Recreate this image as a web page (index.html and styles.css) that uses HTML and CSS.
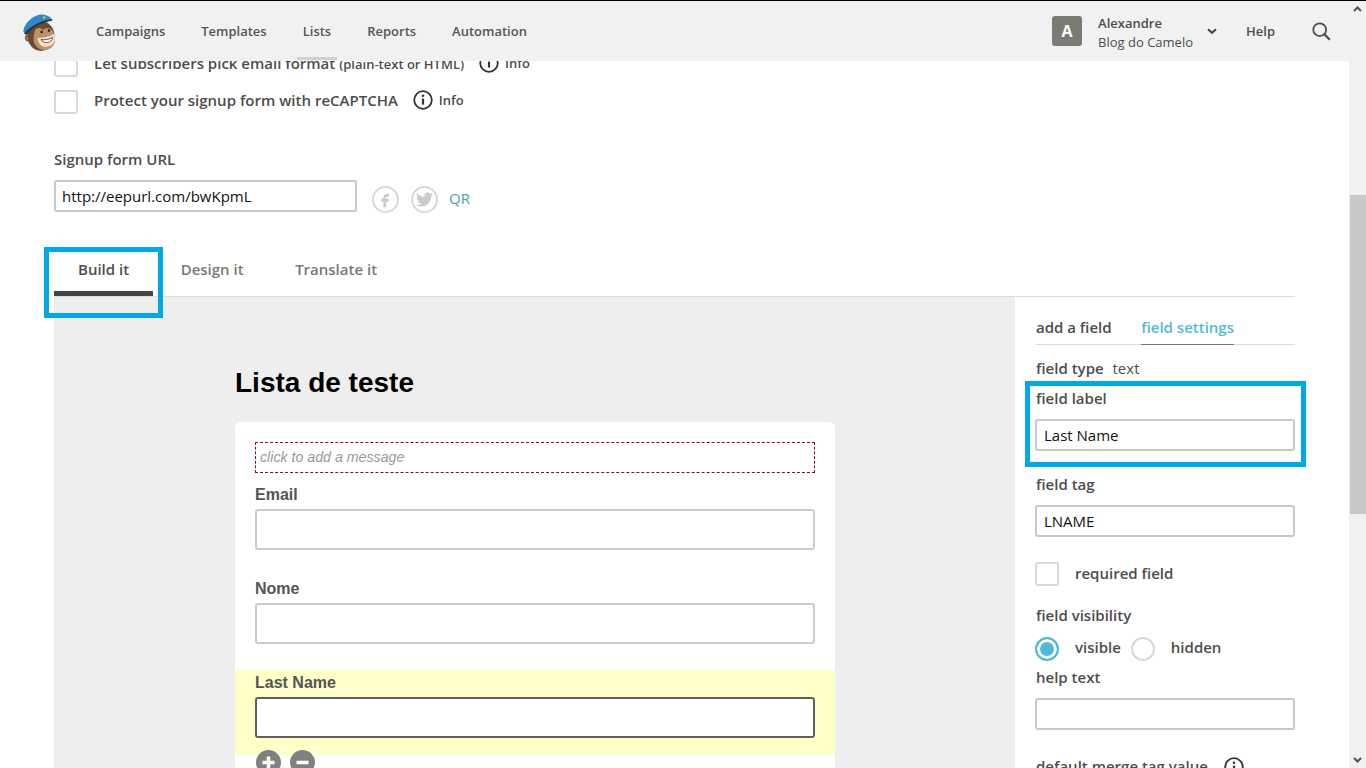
FILE: index.html
```html
<!DOCTYPE html>
<html lang="en">
<head>
  <meta charset="UTF-8">
  <title>Signup forms</title>
  <link rel="stylesheet" href="styles.css">
</head>
<body>

<div class="page">
  <header class="topbar">
    <svg class="logo" width="40" height="40" viewBox="0 0 40 40">
      <circle cx="9.500" cy="25" r="3.600" fill="#8b5e3c"/>
      <circle cx="9.500" cy="25" r="1.800" fill="#d9a87a"/>
      <ellipse cx="22" cy="23" rx="13.500" ry="15" fill="#6b4a30"/>
      <path d="M17 16c3-2 5-1 7 1 2-2 5-3 8-1 3 3 4 7 4 11 0 6-5 10-11 10-5 0-9-4-10-8-1-4 0-10 2-13z" fill="#bd9268"/>
      <path d="M18.500 25c4 0 11-1 16.500-4 2 5 1 12-8 13-5 0-8-4-8.500-9z" fill="#f3e2c8"/>
      <path d="M22 26.500c4 .8 8-.2 11.500-2-.3 3-2.500 5-6 5-2.500 0-4.500-1-5.500-3z" fill="#fff" stroke="#4a3020" stroke-width=".8"/>
      <circle cx="22.600" cy="19" r="1.200" fill="#22160e"/>
      <circle cx="30" cy="17.500" r="1.200" fill="#22160e"/>
      <path d="M4.300 18.700C5 11 12 4 19.300 2c5-1.200 11 .5 13.400 4C24 7 13 12 6 20z" fill="#3089c6"/>
      <path d="M5 20.500C12 12.500 23 7 32.700 6l1 1.500C24 9 14 14 7.500 22z" fill="#22384f"/>
      <circle cx="25" cy="4.500" r="1.200" fill="#e8c24a"/>
    </svg>
    <nav class="mainnav">
      <a>Campaigns</a>
      <a>Templates</a>
      <a class="has-marker">Lists</a>
      <a>Reports</a>
      <a>Automation</a>
    </nav>
    <div class="account">
      <span class="avatar">A</span>
      <span class="account-names">
        <b>Alexandre</b>
        <span>Blog do Camelo</span>
      </span>
      <svg class="chevron" width="10" height="7" viewBox="0 0 10 7"><path d="M1 1.200l4 3.600 4-3.600" fill="none" stroke="#444" stroke-width="2"/></svg>
      <a class="help">Help</a>
      <svg class="search" width="19" height="19" viewBox="0 0 19 19"><circle cx="7.700" cy="7.700" r="6.400" fill="none" stroke="#4d4d4d" stroke-width="1.800"/><path d="M12.400 12.400l5.400 5.400" stroke="#4d4d4d" stroke-width="2.200"/></svg>
    </div>
  </header>

  <main class="content">
    <div class="option">
      <span class="checkbox"></span>
      <span class="option-text">Let subscribers pick email format <small>(plain-text or HTML)</small></span>
      <svg class="info" width="20" height="20" viewBox="0 0 20 20"><circle cx="10" cy="10" r="8.800" fill="none" stroke="#333" stroke-width="1.800"/><circle cx="10" cy="5.800" r="1.300" fill="#333"/><path d="M10 8.600v6" stroke="#333" stroke-width="2.200"/></svg>
      <span class="info-text">Info</span>
    </div>
    <div class="option second">
      <span class="checkbox"></span>
      <span class="option-text">Protect your signup form with reCAPTCHA</span>
      <svg class="info" width="20" height="20" viewBox="0 0 20 20"><circle cx="10" cy="10" r="8.800" fill="none" stroke="#333" stroke-width="1.800"/><circle cx="10" cy="5.800" r="1.300" fill="#333"/><path d="M10 8.600v6" stroke="#333" stroke-width="2.200"/></svg>
      <span class="info-text">Info</span>
    </div>

    <label class="url-label">Signup form URL</label>
    <div class="url-row">
      <input class="text-input url-input" type="text" value="http://eepurl.com/bwKpmL">
      <span class="share-icon">
        <svg width="17" height="17" viewBox="0 0 24 24"><path d="M14 8h3V4h-3c-2.800 0-5 2.200-5 5v2H6v4h3v8h4v-8h3.500l.5-4h-4V9c0-.6.400-1 1-1z" fill="#ccc"/></svg>
      </span>
      <span class="share-icon">
        <svg width="17" height="17" viewBox="0 0 24 24"><path d="M23.954 4.569c-.885.389-1.83.654-2.825.775 1.014-.611 1.794-1.574 2.163-2.723-.951.555-2.005.959-3.127 1.184-.896-.959-2.173-1.559-3.591-1.559-2.717 0-4.92 2.203-4.92 4.917 0 .39.045.765.127 1.124C7.691 8.094 4.066 6.13 1.64 3.161c-.427.722-.666 1.561-.666 2.475 0 1.71.87 3.213 2.188 4.096-.807-.026-1.566-.248-2.228-.616v.061c0 2.385 1.693 4.374 3.946 4.827-.413.111-.849.171-1.296.171-.314 0-.615-.03-.916-.086.631 1.953 2.445 3.377 4.604 3.417-1.68 1.319-3.809 2.105-6.102 2.105-.39 0-.779-.023-1.17-.067 2.189 1.394 4.768 2.209 7.557 2.209 9.054 0 13.999-7.496 13.999-13.986 0-.209 0-.42-.015-.63.961-.689 1.8-1.56 2.46-2.548l-.047-.02z" fill="#ccc"/></svg>
      </span>
      <a class="qr">QR</a>
    </div>

    <div class="tabs">
      <a class="tab active">Build it<span class="callout tab-callout"></span></a>
      <a class="tab">Design it</a>
      <a class="tab">Translate it</a>
    </div>

    <div class="workspace">
      <section class="canvas">
        <h1 class="form-title">Lista de teste</h1>
        <div class="form-card">
          <div class="form-field">
            <div class="message-box">click to add a message</div>
          </div>
          <div class="form-field email">
            <label>Email</label>
            <span class="fake-input"></span>
          </div>
          <div class="form-field nome">
            <label>Nome</label>
            <span class="fake-input"></span>
          </div>
          <div class="form-field selected">
            <label>Last Name</label>
            <span class="fake-input"></span>
          </div>
          <div class="form-field field-actions">
            <span class="round-btn">
              <svg width="15" height="15" viewBox="0 0 15 15"><path d="M1.500 7.500h12M7.500 1.500v12" stroke="#fff" stroke-width="3.500"/></svg>
            </span>
            <span class="round-btn">
              <svg width="15" height="15" viewBox="0 0 15 15"><path d="M1.500 7.500h12" stroke="#fff" stroke-width="3.500"/></svg>
            </span>
          </div>
        </div>
      </section>

      <aside class="sidebar">
        <div class="side-tabs">
          <a>add a field</a>
          <a class="current">field settings</a>
        </div>
        <div class="side-label type-row">field type <span>text</span></div>
        <div class="label-group">
          <span class="callout label-callout"></span>
          <div class="side-label">field label</div>
          <input class="text-input side-input" type="text" value="Last Name">
        </div>
        <div class="side-label tag-label">field tag</div>
        <input class="text-input side-input" type="text" value="LNAME">
        <div class="required-row">
          <span class="checkbox"></span>
          <span class="lifted">required field</span>
        </div>
        <div class="side-label visibility-label">field visibility</div>
        <div class="radio-row">
          <span class="radio on"></span>
          <span class="radio-text">visible</span>
          <span class="radio"></span>
          <span class="radio-text">hidden</span>
        </div>
        <div class="side-label help-label">help text</div>
        <input class="text-input side-input" type="text">
        <div class="side-label merge-label">default merge tag value
          <svg class="merge-info" width="20" height="20" viewBox="0 0 20 20"><circle cx="10" cy="10" r="8.800" fill="none" stroke="#333" stroke-width="1.800"/><circle cx="10" cy="5.800" r="1.300" fill="#333"/><path d="M10 8.600v6" stroke="#333" stroke-width="2.200"/></svg>
        </div>
      </aside>
    </div>
  </main>
</div>

<div class="scrollbar">
  <svg class="arrow" width="17" height="17" viewBox="0 0 17 17"><path d="M5 10l3.500-3.500L12 10" fill="none" stroke="#505050" stroke-width="2"/></svg>
  <div class="thumb"></div>
  <svg class="arrow bottom" width="17" height="17" viewBox="0 0 17 17"><path d="M5 7l3.500 3.500L12 7" fill="none" stroke="#505050" stroke-width="2"/></svg>
</div>

</body>
</html>
```

FILE: styles.css
```css
* {
  box-sizing: border-box;
}

html, body {
  height: 100%;
}

body {
  margin: 0;
  border-top: 1px solid #000;
  display: flex;
  overflow: hidden;
  background: #fff;
  color: #4d4d4d;
  font-family: "Open Sans", sans-serif;
  font-size: 15px;
}

.page {
  flex: 1;
  min-width: 0;
  overflow: hidden;
}

/* top bar sits over the scrolled page */
.topbar {
  position: fixed;
  top: 1px;
  left: 0;
  z-index: 5;
  width: 1349px;
  height: 60px;
  display: flex;
  align-items: center;
  background: #f1f1f1;
}

.logo {
  position: absolute;
  left: 19px;
  top: 12px;
}

.mainnav {
  display: flex;
  gap: 36px;
  margin-left: 96px;
  font-size: 13px;
  font-weight: 600;
  color: #555;
}

.mainnav .has-marker {
  position: relative;
}

.mainnav .has-marker::after {
  content: "";
  position: absolute;
  left: -6px;
  right: -6px;
  bottom: -20px;
  height: 3px;
  background: #d0d0d0;
}

.account {
  display: flex;
  align-items: center;
  margin-left: auto;
  margin-right: 18px;
  font-size: 13px;
}

.avatar {
  width: 30px;
  height: 30px;
  margin-right: 16px;
  border-radius: 3px;
  background: #7b7b73;
  color: #fff;
  font-size: 16px;
  font-weight: 700;
  line-height: 30px;
  text-align: center;
}

.account-names {
  display: flex;
  flex-direction: column;
  gap: 1px;
  margin-top: 2px;
  line-height: 18px;
}

.account-names b {
  font-weight: 600;
}

.chevron {
  margin-left: 14px;
}

.help {
  margin-left: 29px;
  font-weight: 600;
}

.search {
  margin-left: 37px;
}

.content {
  padding: 52px 54px 0;
}

.option {
  display: flex;
  align-items: center;
  height: 24px;
  font-weight: 600;
}

.option.second {
  margin-top: 13px;
}

.option-text {
  margin: -4px 0 0 16px;
}

.option-text small {
  font-size: 13px;
}

.info {
  margin: -4px 0 0 15px;
}

.info-text {
  margin: -4px 0 0 6px;
  font-size: 13px;
}

.checkbox {
  flex: none;
  display: block;
  width: 24px;
  height: 24px;
  border: 2px solid #d8d8d8;
  border-radius: 3px;
  background: #fff;
}

.url-label {
  display: block;
  margin-top: 35px;
  line-height: 20px;
  font-weight: 600;
}

.url-row {
  display: flex;
  align-items: flex-start;
  margin-top: 11px;
}

.text-input {
  display: block;
  height: 32px;
  padding: 0 6px;
  border: 2px solid #c8c8c8;
  border-radius: 3px;
  background: #fff;
  color: #111;
  font-family: "Open Sans", sans-serif;
  font-size: 15px;
  outline: none;
}

.url-input {
  width: 303px;
  margin-right: 15px;
}

.share-icon {
  width: 27px;
  height: 27px;
  margin: 6px 12px 0 0;
  display: flex;
  align-items: center;
  justify-content: center;
  border: 2px solid #d8d8d8;
  border-radius: 50%;
}

.qr {
  margin: 8px 0 0 -1px;
  color: #4b9db5;
  line-height: 20px;
}

.tabs {
  display: flex;
  gap: 3.5px;
  height: 49px;
  margin-top: 35px;
  border-bottom: 1px solid #ddd;
  font-weight: 600;
  color: #7a7a72;
}

.tab {
  position: relative;
  height: 48px;
  padding: 11px 24px 0;
  line-height: 20px;
}

.tab.active {
  border-bottom: 5px solid #444;
  color: #4d4d4d;
}

/* blue annotation boxes drawn over the screenshot */
.callout {
  position: absolute;
  z-index: 3;
  border: 5px solid #00a8e8;
}

.tab-callout {
  left: -10px;
  top: -1px;
  width: 119px;
  height: 71px;
}

.workspace {
  display: flex;
}

.canvas {
  width: 961px;
  height: 480px;
  padding: 70px 0 0 181px;
  background: #eee;
}

.form-title {
  margin: 0;
  color: #000;
  font-family: "Liberation Sans", sans-serif;
  font-size: 28px;
  font-weight: 700;
  line-height: 32px;
}

.form-card {
  width: 600px;
  height: 400px;
  margin-top: 23px;
  padding-top: 20px;
  border-radius: 6px 6px 0 0;
  background: #fff;
  font-family: "Liberation Sans", sans-serif;
}

.form-field {
  padding: 0 20px;
}

.form-field label {
  display: block;
  margin-bottom: 4px;
  color: #555;
  font-size: 16px;
  font-weight: 700;
  line-height: 20px;
}

.message-box {
  height: 31px;
  padding-left: 4px;
  border: 1px dashed #8c0f14;
  color: #999;
  font-size: 14.2px;
  font-style: italic;
  line-height: 28px;
}

.fake-input {
  display: block;
  height: 41px;
  border: 2px solid #ccc;
  border-radius: 3px;
  background: #fff;
}

.form-field.email {
  margin-top: 12px;
}

.form-field.nome {
  margin-top: 29px;
}

.form-field.selected {
  margin-top: 26px;
  padding-top: 3px;
  padding-bottom: 17px;
  background: #ffffc8;
}

.selected .fake-input {
  border-color: #5f5f5f;
}

.field-actions {
  display: flex;
  gap: 9px;
  margin-top: -5px;
  padding-left: 21px;
}

.round-btn {
  width: 25px;
  height: 25px;
  display: flex;
  align-items: center;
  justify-content: center;
  border-radius: 50%;
  background: #808080;
}

.sidebar {
  width: 280px;
  padding: 20px 0 0 21px;
  background: #fff;
}

.side-tabs {
  display: flex;
  gap: 29.5px;
  height: 28px;
  border-bottom: 1px solid #ddd;
  font-weight: 600;
  line-height: 20px;
}

.side-tabs .current {
  height: 28px;
  border-bottom: 1px solid #777;
  color: #52bad5;
}

.side-label {
  line-height: 20px;
  font-weight: 600;
}

.side-label span {
  margin-left: 5px;
  font-weight: 400;
}

.type-row {
  margin-top: 13px;
}

.label-group {
  position: relative;
  margin-top: 10px;
}

.label-callout {
  left: -11px;
  top: -7px;
  width: 281px;
  height: 86px;
}

.side-input {
  width: 260px;
  margin: 11px 0 0 -1px;
  padding: 0 7px;
}

.tag-label {
  margin-top: 23px;
}

.required-row {
  display: flex;
  align-items: center;
  gap: 16px;
  margin: 25px 0 0 -1px;
  font-weight: 600;
}

.lifted {
  margin-top: -2px;
}

.visibility-label {
  margin-top: 19px;
}

.radio-row {
  display: flex;
  align-items: center;
  height: 24px;
  margin: 12px 0 0 -1px;
  font-weight: 600;
}

.radio {
  flex: none;
  width: 24px;
  height: 24px;
  border: 2px solid #d8d8d8;
  border-radius: 50%;
}

.radio.on {
  border-color: #52bad5;
  background: #52bad5;
  box-shadow: inset 0 0 0 3px #fff;
}

.radio-text {
  margin: -4px 10px 0 16px;
}

.help-label {
  margin-top: 6px;
}

.merge-label {
  display: flex;
  align-items: center;
  gap: 16px;
  margin-top: 25px;
}

.merge-info {
  margin-top: 2px;
}

.scrollbar {
  flex: none;
  width: 17px;
  display: flex;
  flex-direction: column;
  background: #f1f1f1;
}

.arrow {
  flex: none;
}

.arrow.bottom {
  margin-top: auto;
}

.thumb {
  height: 319px;
  margin: 177px 0 0 1px;
  background: #c8c8c8;
}
```
